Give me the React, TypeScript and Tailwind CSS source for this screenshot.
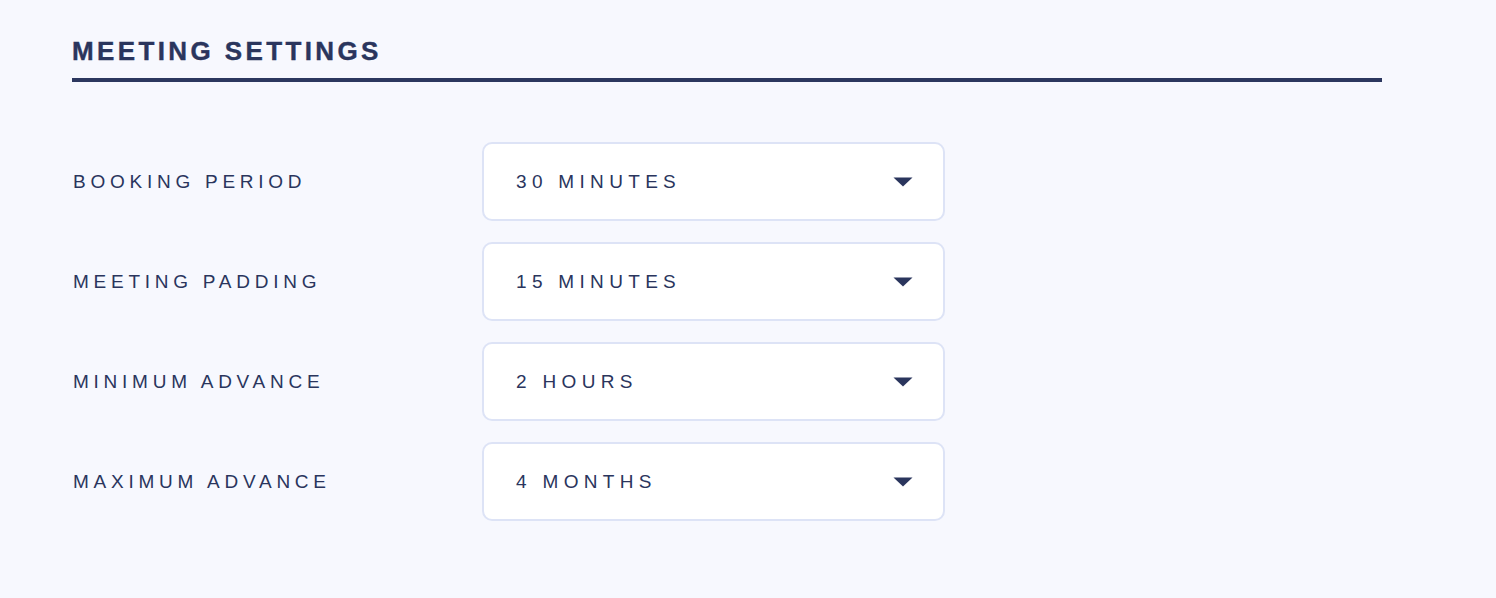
const rows = [
  { label: "BOOKING PERIOD", value: "30 MINUTES" },
  { label: "MEETING PADDING", value: "15 MINUTES" },
  { label: "MINIMUM ADVANCE", value: "2 HOURS" },
  { label: "MAXIMUM ADVANCE", value: "4 MONTHS" },
]

const Caret = () => (
  <svg width="20" height="10" viewBox="0 0 20 10" className="shrink-0">
    <path d="M0.5 0.5 L19.5 0.5 L10 9.5 Z" fill="#2a355d" />
  </svg>
)

const SettingRow = ({ label, value }: { label: string; value: string }) => (
  <div className="flex items-center">
    <div className="w-[410px] pl-px text-[19px] leading-[22px] tracking-[0.25em] text-[#2a355d]">
      {label}
    </div>
    <button className="flex h-[79px] w-[463px] items-center justify-between rounded-[10px] border-2 border-[#dde3f6] bg-white pl-[32px] pr-[30px] text-left">
      <span className="text-[19px] leading-[22px] tracking-[0.28em] text-[#2a355d]">{value}</span>
      <Caret />
    </button>
  </div>
)

export default function App() {
  return (
    <div
      className="min-h-[598px] w-full bg-[#f7f8fe] pl-[72px] pt-[36px]"
      style={{ fontFamily: '"Liberation Sans", Arial, sans-serif' }}
    >
      <div className="w-[1310px] border-b-4 border-[#2c375f] pb-3">
        <h2 className="text-[26px] font-bold leading-[30px] tracking-[0.13em] text-[#2a355d] [-webkit-text-stroke:0.4px_#2a355d]">
          MEETING SETTINGS
        </h2>
      </div>
      <div className="mt-[60px] flex flex-col gap-[21px]">
        {rows.map((r) => (
          <SettingRow key={r.label} label={r.label} value={r.value} />
        ))}
      </div>
    </div>
  )
}
